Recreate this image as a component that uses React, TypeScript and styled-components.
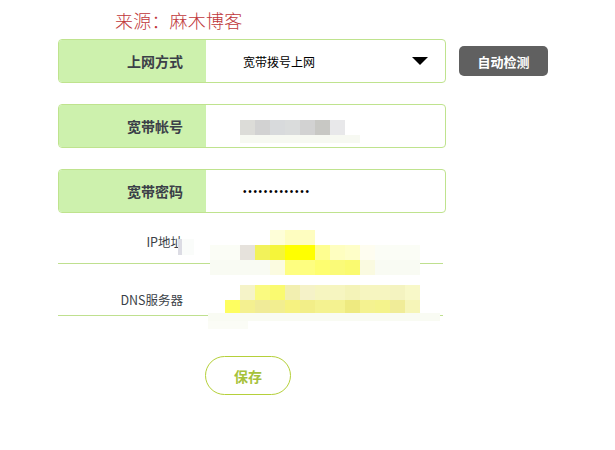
import React from 'react';
import styled, { createGlobalStyle } from 'styled-components';

const CJK = `"Noto Sans CJK SC", "Liberation Sans", sans-serif`;

const GlobalStyle = createGlobalStyle`
  html, body {
    margin: 0;
    padding: 0;
    background: #fff;
    font-family: ${CJK};
  }
`;

type Patch = {
  x: number;
  y: number;
  cell: number;
  rows: (string | null)[][];
};

// pixelated redaction patches laid over the values
const PATCHES: Patch[] = [
  {
    x: 240,
    y: 120,
    cell: 15,
    rows: [['#dcdcd8', '#d2d2d2', '#d8dadc', '#dadcdc', '#d2d2d2', '#c8c8c4', '#e8e8ea']],
  },
  {
    x: 240,
    y: 135,
    cell: 8,
    rows: [['#f7f9f2', '#f7f9f2', '#f7f9f2', '#f7f9f2', '#f7f9f2', '#f7f9f2', '#f7f9f2', '#f7f9f2', '#f7f9f2', '#f7f9f2', '#f7f9f2', '#f7f9f2', '#f7f9f2', '#f7f9f2', '#f7f9f2']],
  },
  {
    x: 178,
    y: 239,
    cell: 4,
    rows: [
      ['#dcdce4', '#fafcfa', '#fafcfa', '#fafcfa'],
      ['#dcdce4', '#fafcfa', '#fafcfa', '#fafcfa'],
      ['#dcdce4', '#fafcfa', '#fafcfa', '#fafcfa'],
      ['#dcdce4', '#fafcfa', '#fafcfa', '#fafcfa'],
    ],
  },
  {
    x: 210,
    y: 230,
    cell: 15,
    rows: [
      [null, null, null, null, '#fefed8', '#fefdc0', '#fefdc0', null, null, null],
      ['#fbfdf6', '#fbfdf6', '#e6e2dc', '#f2f25a', '#f5f53a', '#ffff00', '#ffff00', '#fefe90', '#fefec0', '#fefec8', '#fefdf0', '#fbfdf6', '#fbfdf6', '#fbfdf6'],
      ['#f9fbf3', '#f9fbf3', '#f9fbf3', '#f9fbf3', '#fbfbe0', '#fefe80', '#fefe80', '#fefe70', '#fafa78', '#fafa70', '#fafae0', '#f9fbf3', '#f9fbf3', '#f9fbf3'],
    ],
  },
  {
    x: 225,
    y: 285,
    cell: 15,
    rows: [
      [null, '#f5f3c8', '#fafa80', '#fafa70', '#f2efb0', '#f5f2c8', '#f6f5c0', '#f6f5c0', '#f4f3b8', '#f6f5c0', '#f6f5c0', '#f4f3c0', '#f8f8c8'],
      ['#fefe60', '#f4f090', '#f0eb98', '#f2ee90', '#f6f280', '#f2ee88', '#f4f290', '#f4f290', '#eeea80', '#f4f290', '#f4f38c', '#f0ec98', '#f6f5b8'],
    ],
  },
  {
    x: 208,
    y: 313,
    cell: 8,
    rows: [
      ['#f9fbf3', '#f9fbf3', '#f9fbf3', '#f9fbf3', '#f9fbf3', '#f9fbf3', '#f9fbf3', '#f9fbf3', '#f9fbf3', '#f9fbf3', '#f9fbf3', '#f9fbf3', '#f9fbf3', '#f9fbf3', '#f9fbf3', '#f9fbf3', '#f9fbf3', '#f9fbf3', '#f9fbf3', '#f9fbf3', '#f9fbf3', '#f9fbf3', '#f9fbf3', '#f9fbf3', '#f9fbf3', '#f9fbf3', '#f9fbf3', '#f9fbf3', '#f9fbf3'],
      ['#fbfcf6', '#fbfcf6', '#fbfcf6', '#fbfcf6', '#fbfcf6', null, null, null, null, null],
    ],
  },
];

export default function App() {
  return (
    <>
      <GlobalStyle />
      <S_Page>
        <S_Watermark>来源：麻木博客</S_Watermark>

        <S_Row>
          <S_Field>
            <S_Label>上网方式</S_Label>
            <S_Value>
              <span>宽带拨号上网</span>
              <S_Caret />
            </S_Value>
          </S_Field>
          <S_DetectBtn>自动检测</S_DetectBtn>
        </S_Row>

        <S_Row>
          <S_Field>
            <S_Label>宽带帐号</S_Label>
            <S_Value />
          </S_Field>
        </S_Row>

        <S_Row>
          <S_Field>
            <S_Label>宽带密码</S_Label>
            <S_Value>
              <S_Dots>•••••••••••••</S_Dots>
            </S_Value>
          </S_Field>
        </S_Row>

        <S_PlainRow $height={30} $pad={14}>
          <S_PlainLabel>IP地址</S_PlainLabel>
        </S_PlainRow>
        <S_PlainRow $height={52} $pad={8}>
          <S_PlainLabel>DNS服务器</S_PlainLabel>
        </S_PlainRow>

        <S_Actions>
          <S_SaveBtn>保存</S_SaveBtn>
        </S_Actions>

        {PATCHES.map((p, i) => (
          <S_Patch key={i} $x={p.x} $y={p.y}>
            {p.rows.map((row, r) => (
              <S_PatchRow key={r}>
                {row.map((c, k) => (
                  <S_Cell key={k} $c={c} $size={p.cell} />
                ))}
              </S_PatchRow>
            ))}
          </S_Patch>
        ))}
      </S_Page>
    </>
  );
}

const S_Page = styled.div`
  position: relative;
  width: 615px;
  height: 450px;
  padding: 10px 0 0 58px;
  box-sizing: border-box;
  display: flex;
  flex-flow: column;
  overflow: hidden;
`;

const S_Watermark = styled.div`
  margin-left: 57px;
  height: 29px;
  font-size: 18px;
  line-height: 20px;
  font-weight: 300;
  color: #c0363a;
  letter-spacing: 0.2px;
`;

const S_Row = styled.div`
  display: flex;
  align-items: center;
  gap: 13px;
  margin-bottom: 21px;
`;

const S_Field = styled.div`
  display: flex;
  width: 388px;
  height: 44px;
  box-sizing: border-box;
  border: 1px solid #bfe38e;
  border-radius: 4px;
  overflow: hidden;
`;

const S_Label = styled.div`
  width: 147px;
  flex-shrink: 0;
  background: #cdf1ad;
  display: flex;
  align-items: center;
  justify-content: flex-end;
  padding-right: 23px;
  box-sizing: border-box;
  font-size: 14px;
  font-weight: bold;
  color: #3b3f48;
`;

const S_Value = styled.div`
  flex: 1;
  display: flex;
  align-items: center;
  justify-content: space-between;
  padding: 0 17px 0 37px;
  font-size: 12px;
  color: #000;
`;

const S_Caret = styled.span`
  width: 0;
  height: 0;
  border-left: 8px solid transparent;
  border-right: 8px solid transparent;
  border-top: 8px solid #000;
`;

const S_Dots = styled.span`
  font-family: "Liberation Sans", sans-serif;
  font-size: 10px;
  letter-spacing: 1.7px;
  color: #000;
`;

const S_DetectBtn = styled.button`
  width: 89px;
  height: 30px;
  border: none;
  border-radius: 5px;
  background: #606060;
  color: #fff;
  font-family: ${CJK};
  font-size: 13px;
  font-weight: bold;
  padding: 0;
`;

const S_PlainRow = styled.div<{ $height: number; $pad: number }>`
  width: 385px;
  height: ${({ $height }) => $height}px;
  box-sizing: border-box;
  border-bottom: 1px solid #bfe08f;
  display: flex;
  align-items: flex-end;
  padding-bottom: ${({ $pad }) => $pad}px;
`;

const S_PlainLabel = styled.div`
  width: 147px;
  text-align: right;
  padding-right: 22px;
  box-sizing: border-box;
  font-size: 12.5px;
  line-height: 14px;
  color: #3b3f48;
`;

const S_Actions = styled.div`
  padding: 40px 0 0 147px;
`;

const S_SaveBtn = styled.button`
  width: 86px;
  height: 39px;
  border: 1px solid #b5d03a;
  border-radius: 20px;
  background: #fff;
  color: #a6c23a;
  font-family: ${CJK};
  font-size: 14px;
  font-weight: bold;
  padding: 0;
`;

const S_Patch = styled.div<{ $x: number; $y: number }>`
  position: absolute;
  left: ${({ $x }) => $x}px;
  top: ${({ $y }) => $y}px;
  display: flex;
  flex-flow: column;
`;

const S_PatchRow = styled.div`
  display: flex;
`;

const S_Cell = styled.div<{ $c: string | null; $size: number }>`
  width: ${({ $size }) => $size}px;
  height: ${({ $size }) => $size}px;
  background: ${({ $c }) => $c ?? 'transparent'};
`;
